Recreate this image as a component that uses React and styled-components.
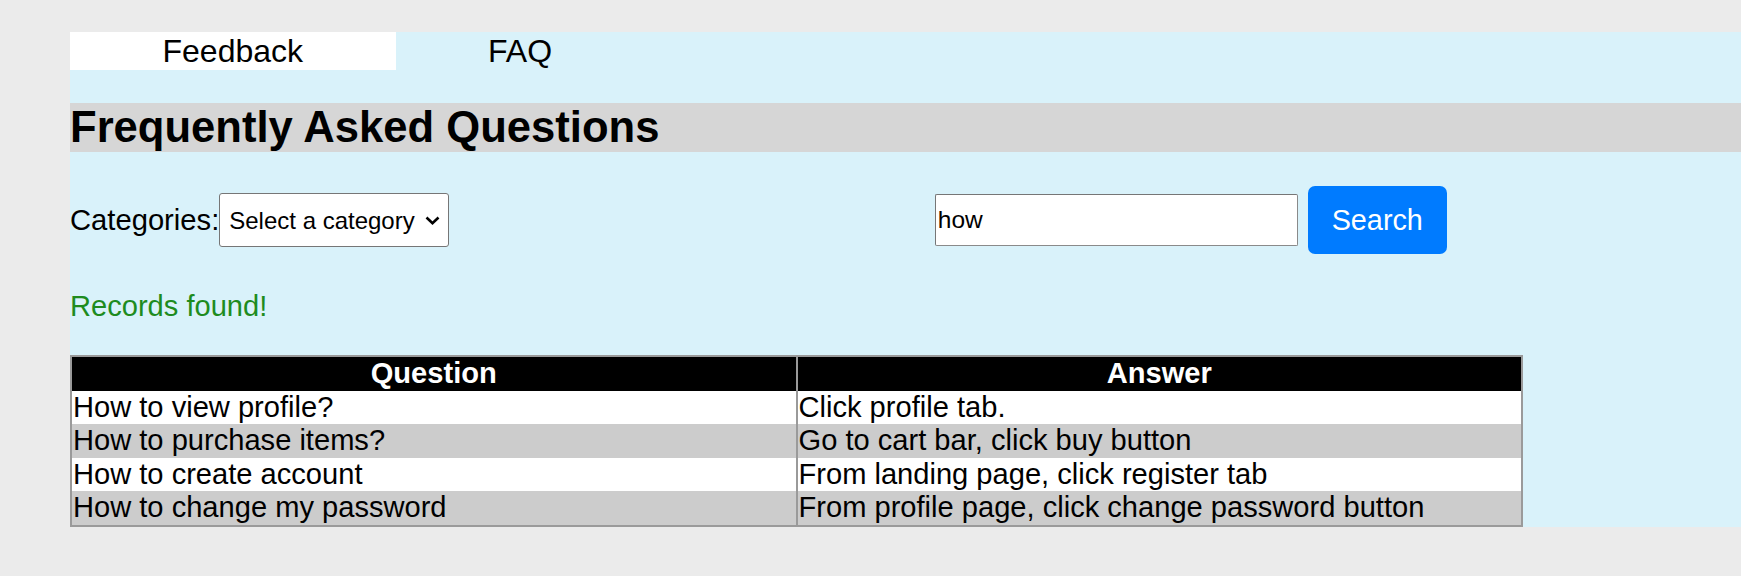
import React from "react";
import styled, { createGlobalStyle } from "styled-components";

const GlobalStyle = createGlobalStyle`
  html, body {
    margin: 0;
    padding: 0;
    background: #ebebeb;
    font-family: "Liberation Sans", Arial, sans-serif;
    color: #000;
  }
`;

const Page = styled.div`
  padding: 32px 0 0 70px;
`;

const Panel = styled.div`
  background: #d9f2fa;
`;

const TabBar = styled.nav`
  display: flex;
  height: 38px;
`;

const Tab = styled.a`
  display: block;
  padding: 0 92.5px;
  font-size: 32px;
  line-height: 38px;
  color: #000;
  text-decoration: none;
  background: ${(p) => (p.$active ? "#ffffff" : "transparent")};
`;

const Heading = styled.h1`
  margin: 33px 0 0;
  background: #d6d6d6;
  font-size: 43.6px;
  line-height: 49px;
  font-weight: 700;
`;

const Toolbar = styled.div`
  display: flex;
  align-items: center;
  margin-top: 34px;
  height: 68px;
`;

const Label = styled.label`
  font-size: 29.2px;
  line-height: 33px;
`;

const SelectWrap = styled.div`
  position: relative;
  display: flex;
`;

const Select = styled.select`
  appearance: none;
  -webkit-appearance: none;
  width: 230px;
  height: 54px;
  box-sizing: border-box;
  margin: 0;
  padding: 0 30px 0 9px;
  font-family: "Liberation Sans", Arial, sans-serif;
  font-size: 24px;
  color: #000;
  background: #fff;
  border: 1.5px solid #767676;
  border-radius: 3px;
`;

const Chevron = styled.svg`
  position: absolute;
  right: 9px;
  top: 50%;
  width: 15px;
  height: 9px;
  margin-top: -4px;
  pointer-events: none;
`;

const SearchGroup = styled.form`
  display: flex;
  align-items: center;
  gap: 10px;
  margin-left: 485.5px;
`;

const SearchInput = styled.input`
  width: 363px;
  height: 52px;
  box-sizing: border-box;
  margin: 0;
  padding: 0 2px;
  font-family: "Liberation Sans", Arial, sans-serif;
  font-size: 24.5px;
  color: #000;
  background: #fff;
  border: 1.5px solid #8a8a8a;
  border-top-color: #767676;
  border-left-color: #767676;
  border-radius: 2px;
`;

const SearchButton = styled.button`
  width: 139px;
  height: 68px;
  margin: 0;
  padding: 0;
  border: none;
  border-radius: 7px;
  background: #007bff;
  color: #fff;
  font-family: "Liberation Sans", Arial, sans-serif;
  font-size: 28.8px;
`;

const Status = styled.p`
  margin: 36px 0 0;
  font-size: 29.1px;
  line-height: 33px;
  color: #1e8c1e;
`;

const Table = styled.table`
  margin-top: 32px;
  width: 1453px;
  border-collapse: collapse;
  border: 2px solid #9a9a9a;
  font-size: 29.1px;
  table-layout: fixed;
`;

const Th = styled.th`
  background: #000;
  color: #fff;
  font-weight: 700;
  padding: 0 1px;
  line-height: 33.6px;
  text-align: center;
  & + & {
    border-left: 2px solid #9a9a9a;
  }
`;

const Row = styled.tr`
  background: ${(p) => (p.$odd ? "#cccccc" : "#ffffff")};
`;

const Td = styled.td`
  padding: 0 1px;
  line-height: 33.6px;
  text-align: left;
  & + & {
    border-left: 2px solid #9a9a9a;
  }
`;

const faqs = [
  ["How to view profile?", "Click profile tab."],
  ["How to purchase items?", "Go to cart bar, click buy button"],
  ["How to create account", "From landing page, click register tab"],
  ["How to change my password", "From profile page, click change password button"],
];

export default function App() {
  return (
    <>
      <GlobalStyle />
      <Page>
        <Panel>
          <TabBar>
            <Tab $active href="#">Feedback</Tab>
            <Tab href="#">FAQ</Tab>
          </TabBar>
          <Heading>Frequently Asked Questions</Heading>
          <Toolbar>
            <Label htmlFor="cat">Categories:</Label>
            <SelectWrap>
              <Select id="cat" defaultValue="">
                <option value="">Select a category</option>
              </Select>
              <Chevron viewBox="0 0 15 9">
                <path d="M1.5 1.5 L7.5 7.2 L13.5 1.5" fill="none" stroke="#000" strokeWidth="2.6" />
              </Chevron>
            </SelectWrap>
            <SearchGroup onSubmit={(e) => e.preventDefault()}>
              <SearchInput defaultValue="how" />
              <SearchButton type="submit">Search</SearchButton>
            </SearchGroup>
          </Toolbar>
          <Status>Records found!</Status>
          <Table>
            <thead>
              <tr>
                <Th>Question</Th>
                <Th>Answer</Th>
              </tr>
            </thead>
            <tbody>
              {faqs.map(([q, a], i) => (
                <Row key={q} $odd={i % 2 === 1}>
                  <Td>{q}</Td>
                  <Td>{a}</Td>
                </Row>
              ))}
            </tbody>
          </Table>
        </Panel>
      </Page>
    </>
  );
}
